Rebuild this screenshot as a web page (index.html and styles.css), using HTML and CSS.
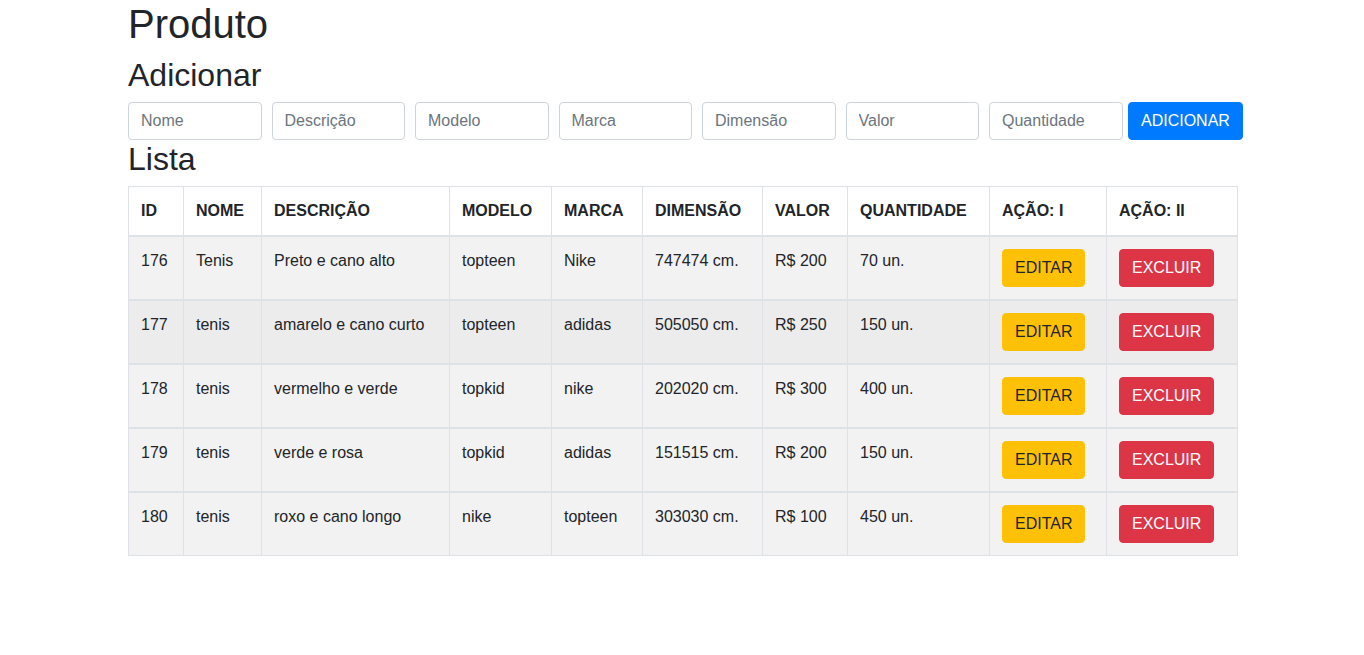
FILE: index.html
```html
<!DOCTYPE html>
<html lang="pt-BR">
<head>
<meta charset="utf-8">
<title>Produto</title>
<link rel="stylesheet" href="styles.css">
</head>
<body>
<div class="container">
  <h1 class="title">Produto</h1>
  <h2 class="subtitle">Adicionar</h2>
  <form class="add-form">
    <input class="field" type="text" placeholder="Nome">
    <input class="field" type="text" placeholder="Descrição">
    <input class="field" type="text" placeholder="Modelo">
    <input class="field" type="text" placeholder="Marca">
    <input class="field" type="text" placeholder="Dimensão">
    <input class="field" type="text" placeholder="Valor">
    <input class="field" type="text" placeholder="Quantidade">
    <button class="btn btn-primary btn-add" type="button">ADICIONAR</button>
  </form>
  <h2 class="subtitle">Lista</h2>
  <table class="table">
    <colgroup>
      <col class="c-id"><col class="c-nome"><col class="c-desc"><col class="c-modelo"><col class="c-marca"><col class="c-dim"><col class="c-valor"><col class="c-qtd"><col class="c-a1"><col class="c-a2">
    </colgroup>
    <thead>
      <tr><th>ID</th><th>NOME</th><th>DESCRIÇÃO</th><th>MODELO</th><th>MARCA</th><th>DIMENSÃO</th><th>VALOR</th><th>QUANTIDADE</th><th>AÇÃO: I</th><th>AÇÃO: II</th></tr>
    </thead>
    <tbody>
      <tr><td>176</td><td>Tenis</td><td>Preto e cano alto</td><td>topteen</td><td>Nike</td><td>747474 cm.</td><td>R$ 200</td><td>70 un.</td><td><button class="btn btn-warning" type="button">EDITAR</button></td><td><button class="btn btn-danger" type="button">EXCLUIR</button></td></tr>
    </tbody>
    <tbody>
      <tr class="hover"><td>177</td><td>tenis</td><td>amarelo e cano curto</td><td>topteen</td><td>adidas</td><td>505050 cm.</td><td>R$ 250</td><td>150 un.</td><td><button class="btn btn-warning" type="button">EDITAR</button></td><td><button class="btn btn-danger" type="button">EXCLUIR</button></td></tr>
    </tbody>
    <tbody>
      <tr><td>178</td><td>tenis</td><td>vermelho e verde</td><td>topkid</td><td>nike</td><td>202020 cm.</td><td>R$ 300</td><td>400 un.</td><td><button class="btn btn-warning" type="button">EDITAR</button></td><td><button class="btn btn-danger" type="button">EXCLUIR</button></td></tr>
    </tbody>
    <tbody>
      <tr><td>179</td><td>tenis</td><td>verde e rosa</td><td>topkid</td><td>adidas</td><td>151515 cm.</td><td>R$ 200</td><td>150 un.</td><td><button class="btn btn-warning" type="button">EDITAR</button></td><td><button class="btn btn-danger" type="button">EXCLUIR</button></td></tr>
    </tbody>
    <tbody>
      <tr><td>180</td><td>tenis</td><td>roxo e cano longo</td><td>nike</td><td>topteen</td><td>303030 cm.</td><td>R$ 100</td><td>450 un.</td><td><button class="btn btn-warning" type="button">EDITAR</button></td><td><button class="btn btn-danger" type="button">EXCLUIR</button></td></tr>
    </tbody>
  </table>
</div>
</body>
</html>
```
FILE: styles.css
```css
* { box-sizing: border-box; }
html, body { margin: 0; padding: 0; }
body {
  font-family: "Liberation Sans", Arial, Helvetica, sans-serif;
  font-size: 16px;
  line-height: 1.5;
  color: #212529;
  background: #fff;
}
.container {
  width: 1140px;
  margin: 0 auto;
  padding: 0 14px 0 16px;
}
.title {
  font-size: 40px;
  font-weight: 500;
  line-height: 48px;
  margin: 0 0 8px;
}
.subtitle {
  font-size: 32px;
  font-weight: 500;
  line-height: 38px;
  margin: 0 0 8px;
}
.add-form {
  display: flex;
  align-items: center;
  gap: 10px;
  margin: 0;
}
.field {
  width: 133.5px;
  height: 38px;
  padding: 6px 12px;
  font-family: inherit;
  font-size: 16px;
  line-height: 1.5;
  color: #495057;
  background: #fff;
  border: 1px solid #ced4da;
  border-radius: 4px;
  flex: none;
}
.field::placeholder { color: #6c757d; opacity: 1; }
.btn {
  display: inline-block;
  font-family: inherit;
  font-size: 16px;
  line-height: 24px;
  padding: 6px 12px;
  border: 1px solid transparent;
  border-radius: 4px;
  cursor: pointer;
  vertical-align: top;
}
.btn-add { margin-left: -5px; flex: none; padding: 6px 12.5px; }
.btn-primary { background: #007bff; border-color: #007bff; color: #fff; }
.btn-warning { background: #ffc107; border-color: #ffc107; color: #212529; }
.btn-danger { background: #dc3545; border-color: #dc3545; color: #fff; }
.table {
  width: 1109px;
  border-collapse: collapse;
  table-layout: fixed;
  margin-top: 0;
}
.table th, .table td {
  padding: 12px;
  border: 1px solid #dee2e6;
  text-align: left;
  vertical-align: top;
  white-space: nowrap;
}
.table th { font-weight: 700; }
.table thead th { border-bottom: 2px solid #dee2e6; }
.table tbody + tbody td { border-top: 2px solid #dee2e6; }
.table tbody tr { background: #f2f2f2; }
.table tbody tr.hover { background: #ececec; }
.c-id { width: 55px; }
.c-nome { width: 78px; }
.c-desc { width: 188px; }
.c-modelo { width: 102px; }
.c-marca { width: 91px; }
.c-dim { width: 120px; }
.c-valor { width: 85px; }
.c-qtd { width: 142px; }
.c-a1 { width: 117px; }
.c-a2 { width: 131px; }
```
